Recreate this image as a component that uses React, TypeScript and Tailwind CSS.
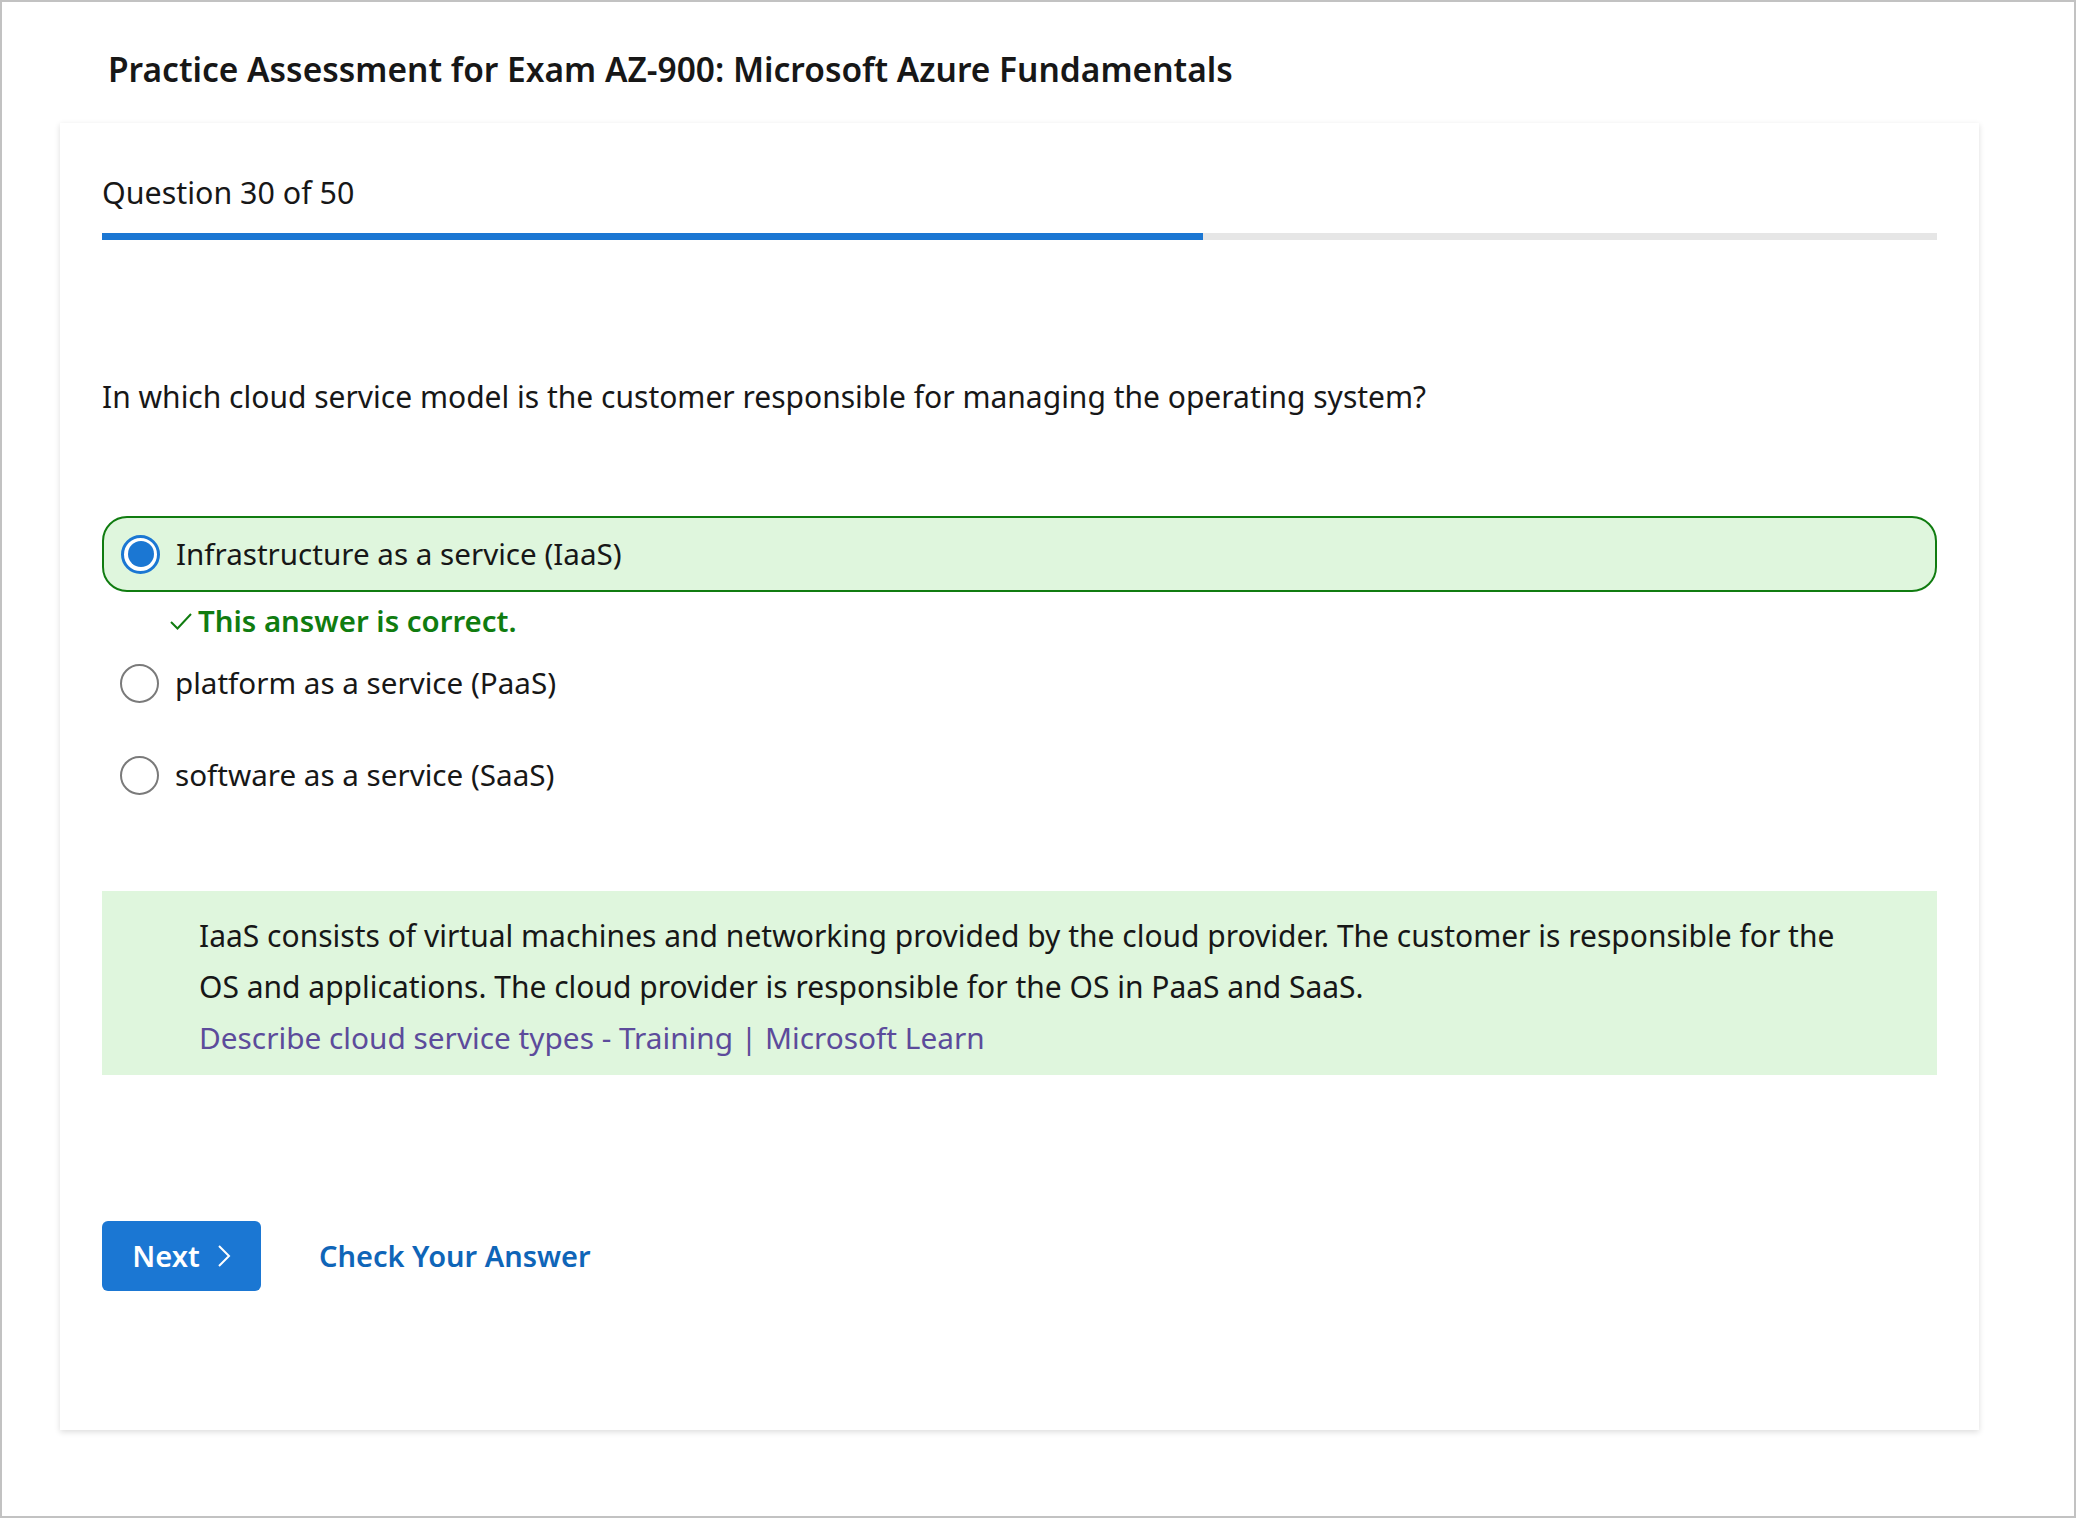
const font = { fontFamily: '"Segoe UI", "Noto Sans", "Open Sans", sans-serif' };

function Radio({ checked }: { checked?: boolean }) {
  if (checked) {
    return (
      <span className="flex h-[39px] w-[39px] shrink-0 items-center justify-center rounded-full border-[3px] border-[#1b77d3] bg-white">
        <span className="h-[26px] w-[26px] rounded-full bg-[#1b77d3]" />
      </span>
    );
  }
  return <span className="h-[39px] w-[39px] shrink-0 rounded-full border-2 border-[#7a7a7a] bg-white" />;
}

const options = [
  { label: "Infrastructure as a service (IaaS)", selected: true },
  { label: "platform as a service (PaaS)" },
  { label: "software as a service (SaaS)" },
];

export default function App() {
  return (
    <div className="h-[1518px] w-full border-2 border-[#c2c2c2] bg-white text-[#171717]" style={font}>
      {/* page title */}
      <h1 className="pl-[106px] pt-[47px] text-[33.5px] font-semibold leading-[40px]">
        Practice Assessment for Exam AZ-900: Microsoft Azure Fundamentals
      </h1>

      {/* question card */}
      <div className="ml-[58px] mt-[34px] w-[1919px] bg-white px-[42px] pb-[139px] pt-[52px] shadow-[0_2px_6px_rgba(0,0,0,0.14)]">
        <div className="text-[30.4px] leading-[36px]">Question 30 of 50</div>
        <div className="mt-[22px] h-[7px] w-full bg-[#e6e6e6]">
          <div className="h-full w-[60%] bg-[#1b77d3]" />
        </div>

        <p className="mt-[137px] text-[30px] leading-[40px]">
          In which cloud service model is the customer responsible for managing the operating system?
        </p>

        <div className="mt-[99px]">
          {options.map((o, i) => (
            <div key={o.label}>
              <div
                className={
                  o.selected
                    ? "flex h-[76px] items-center gap-[16px] rounded-[25px] border-2 border-[#107c10] bg-[#dff6dd] pl-[17px]"
                    : "flex h-[60px] items-center gap-[16px] rounded-[25px] border-2 border-transparent pl-[16px]"
                }
                style={{ marginTop: i === 0 ? 0 : i === 1 ? 14 : 32 }}
              >
                <Radio checked={o.selected} />
                <span className="text-[29.6px] leading-[40px]">{o.label}</span>
              </div>
              {o.selected && (
                <div className="mt-[11px] flex items-center pl-[67px] text-[29.4px] font-semibold leading-[36px] text-[#107c10]">
                  <svg width="24" height="20" viewBox="0 0 24 20" fill="none" className="mr-[5px]">
                    <path d="M2 11 L8.5 17.5 L22 3" stroke="#107c10" strokeWidth="2" />
                  </svg>
                  This answer is correct.
                </div>
              )}
            </div>
          ))}
        </div>

        {/* explanation */}
        <div className="mt-[86px] h-[184px] bg-[#dff6dd] pl-[97px] pr-[40px] pt-[19px] text-[30px] leading-[51px]">
          <p>
            IaaS consists of virtual machines and networking provided by the cloud provider. The customer is responsible for the
            <br />
            OS and applications. The cloud provider is responsible for the OS in PaaS and SaaS.
          </p>
          <a href="#" className="text-[29.8px] text-[#5c4b9b]">
            Describe cloud service types - Training | Microsoft Learn
          </a>
        </div>

        <div className="mt-[146px] flex items-center">
          <button className="flex h-[70px] w-[159px] items-center justify-center gap-[17px] rounded-[6px] bg-[#1b77d3] text-[29px] font-semibold text-white">
            Next
            <svg width="14" height="24" viewBox="0 0 14 24" fill="none">
              <path d="M2 2 L12 12 L2 22" stroke="white" strokeWidth="2" />
            </svg>
          </button>
          <a href="#" className="ml-[58px] text-[29px] font-semibold text-[#0f65b8]">
            Check Your Answer
          </a>
        </div>
      </div>
    </div>
  );
}
